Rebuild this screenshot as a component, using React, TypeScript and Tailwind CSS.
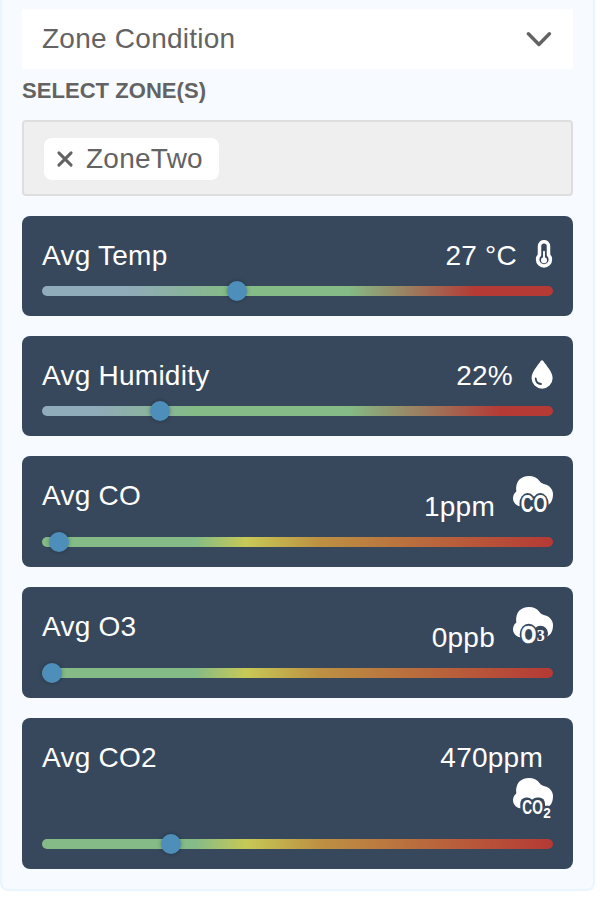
import React from 'react';

const TEMP = 'bg-[linear-gradient(90deg,#90abb9_0%,#90abb9_17%,#85bb86_37%,#85bb86_60%,#b53935_85%,#b53935_100%)]';
const HUMIDITY = 'bg-[linear-gradient(90deg,#90abb9_0%,#90abb9_11%,#85bb86_30%,#85bb86_60%,#b53935_90%,#b53935_100%)]';
const GAS = 'bg-[linear-gradient(90deg,#85bb86_0%,#85bb86_30%,#c7c956_40%,#bd9143_54%,#b53935_100%)]';

function Thermometer() {
  return (
    <svg viewBox="0 0 18 30" className="h-[30px] w-[18px]" fill="none">
      <path
        d="M4.500 6.200a4.500 4.500 0 0 1 9 0v8.800a6.400 6.400 0 1 1-9 0Z"
        stroke="#fff"
        strokeWidth="3.500"
        strokeLinejoin="round"
      />
      <path d="M9 11.800v8" stroke="#fff" strokeWidth="1.900" strokeLinecap="round" />
      <circle cx="9" cy="20.200" r="3" fill="#fff" />
    </svg>
  );
}

function Drop() {
  return (
    <svg viewBox="0 0 22 30" className="h-[30px] w-[22px]" fill="none">
      <path
        d="M12.300 1.100c-.7-1-1.900-1-2.600 0C6.500 6 .6 11.800.6 18.200a10.500 10.500 0 0 0 21 0C21.600 11.800 15.500 6 12.300 1.100Z"
        fill="#fff"
      />
      <path d="M4.700 18.400c.2 3.300 2.300 5.400 5.300 5.600" stroke="#37485d" strokeWidth="1.800" strokeLinecap="round" />
    </svg>
  );
}

function Cloud({ kind }: { kind: 'co' | 'o3' | 'co2' }) {
  return (
    <svg
      viewBox="0 0 40 40"
      className="block h-10 w-10 overflow-visible font-['Liberation_Sans',sans-serif] font-bold tracking-normal"
      fill="#fff"
    >
      <path d="M3.300 15.500C2 5 8 0 16 0c4.500 0 8 1.500 10.500 5 1.500 2.400 3.500 2.800 6 3.400 4 1 7.500 4.800 7.500 9.600 0 5.500-2 10-6 11.500L28 27H14L8 30.500C-1 29.500-2.200 19.500 3.300 15.500Z" />
      {kind === 'co' && (
        <>
          <g fill="#37485d">
            <ellipse cx="14.700" cy="27.700" rx="8.300" ry="10.600" />
            <ellipse cx="27.300" cy="27.700" rx="8.300" ry="10.600" />
          </g>
          <text x="7.700" y="36" fontSize="23.500" textLength="26.500" lengthAdjust="spacingAndGlyphs">
            CO
          </text>
        </>
      )}
      {kind === 'o3' && (
        <>
          <g fill="#37485d">
            <ellipse cx="15.700" cy="27.500" rx="9" ry="10.800" />
            <circle cx="27.500" cy="26.300" r="7.500" />
          </g>
          <text
            x="8.100"
            y="35.800"
            fontSize="23.500"
            textLength="15.200"
            lengthAdjust="spacingAndGlyphs"
            stroke="#fff"
            strokeWidth=".6"
          >
            O
          </text>
          <text x="23.700" y="34" fontSize="16" fontFamily="'Liberation Serif', serif">
            3
          </text>
        </>
      )}
      {kind === 'co2' && (
        <>
          <g fill="#37485d">
            <rect x="7.300" y="19.500" width="13" height="18.500" rx="6" />
            <rect x="18" y="19.500" width="14" height="18.500" rx="6" />
            <rect x="28" y="27.800" width="11.500" height="14" rx="4" />
          </g>
          <text x="9.300" y="35.500" fontSize="19.500" textLength="20.500" lengthAdjust="spacingAndGlyphs">
            CO
          </text>
          <text x="30.200" y="39.800" fontSize="14" textLength="7.500" lengthAdjust="spacingAndGlyphs">
            2
          </text>
        </>
      )}
    </svg>
  );
}

type CardProps = {
  label: string;
  height: string;
  gradient: string;
  knob: number;
  children: React.ReactNode;
};

function Card({ label, height, gradient, knob, children }: CardProps) {
  return (
    <section className={`flex flex-col rounded-lg bg-[#37485d] p-5 text-white ${height}`}>
      <div className="flex flex-1 justify-between">
        <h3 className="leading-10">{label}</h3>
        {children}
      </div>
      <div className={`relative h-2.5 rounded-full ${gradient}`}>
        <span
          className="absolute -top-[5px] size-5 rounded-full bg-[#4e8eba] shadow-[0_0_4px_rgba(0,0,0,0.3)]"
          style={{ left: knob }}
        />
      </div>
    </section>
  );
}

export default function App() {
  return (
    <div className="h-[898px] overflow-hidden bg-white font-['Liberation_Sans',Arial,sans-serif] text-[28px] tracking-[0.25px]">
      <main className="h-[891px] w-[595px] rounded-b-lg border-2 border-t-0 border-[#e9f5ff] bg-[#f7faff] px-5 pt-[9px]">
        <div className="flex h-15 items-center justify-between rounded-xs bg-white px-5 text-[#636363]">
          <span className="leading-[58px]">Zone Condition</span>
          <svg viewBox="0 0 26 16" className="h-4 w-[26px] -translate-x-px" fill="none">
            <path d="m2.400 2.800 10.500 10.700L23.400 2.800" stroke="#636363" strokeWidth="3.400" strokeLinecap="round" strokeLinejoin="round" />
          </svg>
        </div>
        <h2 className="h-[51px] text-[22px] leading-[43px] font-bold tracking-[0.05px] text-[#636363]">SELECT ZONE(S)</h2>
        <div className="flex h-19 items-start rounded-sm border-2 border-[#dedede] bg-[#efefef] pt-4 pl-5">
          <div className="flex h-[42px] w-[175px] items-center gap-3 rounded-lg bg-white pl-3 text-[#636363]">
            <svg viewBox="0 0 18 18" className="size-[18px]" fill="none">
              <path d="m2.900 2.900 12.200 12.200M15.100 2.900 2.900 15.100" stroke="#636363" strokeWidth="3" strokeLinecap="round" />
            </svg>
            <span>ZoneTwo</span>
          </div>
        </div>
        <div className="mt-5 flex flex-col gap-5">
          <Card label="Avg Temp" height="h-[100px]" gradient={TEMP} knob={185}>
            <div className="flex gap-[18px] leading-10">
              <span>27 °C</span>
              <div className="mt-1"><Thermometer /></div>
            </div>
          </Card>
          <Card label="Avg Humidity" height="h-[100px]" gradient={HUMIDITY} knob={108}>
            <div className="flex gap-[18px] leading-10">
              <span>22%</span>
              <div className="mt-1"><Drop /></div>
            </div>
          </Card>
          <Card label="Avg CO" height="h-[111px]" gradient={GAS} knob={7}>
            <div className="flex gap-[18px]">
              <span className="mt-[11px] leading-10">1ppm</span>
              <Cloud kind="co" />
            </div>
          </Card>
          <Card label="Avg O3" height="h-[111px]" gradient={GAS} knob={0}>
            <div className="flex gap-[18px]">
              <span className="mt-[11px] leading-10">0ppb</span>
              <Cloud kind="o3" />
            </div>
          </Card>
          <Card label="Avg CO2" height="h-[151px]" gradient={GAS} knob={119}>
            <div className="flex flex-col items-end">
              <span className="mr-2.5 h-10 leading-10">470ppm</span>
              <Cloud kind="co2" />
            </div>
          </Card>
        </div>
      </main>
    </div>
  );
}
